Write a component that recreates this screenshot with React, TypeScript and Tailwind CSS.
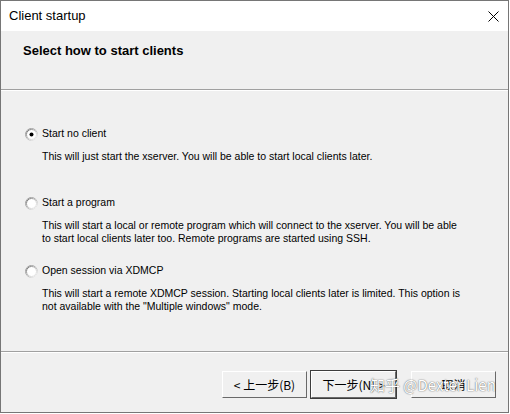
import React, { useState } from 'react';

const SANS = "font-['Liberation_Sans',Arial,sans-serif]";

const Radio: React.FC<{ checked: boolean }> = ({ checked }) => (
  <svg width="13" height="13" viewBox="0 0 13 13" className="shrink-0">
    <defs>
      <linearGradient id="rOuter" x1="0" y1="0" x2="1" y2="1">
        <stop offset="0" stopColor="#8c8c8c" />
        <stop offset="0.5" stopColor="#b4b4b4" />
        <stop offset="1" stopColor="#ffffff" />
      </linearGradient>
      <linearGradient id="rInner" x1="0" y1="0" x2="1" y2="1">
        <stop offset="0" stopColor="#5a5a5a" />
        <stop offset="0.5" stopColor="#c8c8c8" />
        <stop offset="1" stopColor="#eeeeee" />
      </linearGradient>
    </defs>
    <circle cx="6.5" cy="6.5" r="6" fill="#ffffff" stroke="url(#rOuter)" strokeWidth="1" />
    <circle cx="6.5" cy="6.5" r="5" fill="none" stroke="url(#rInner)" strokeWidth="1" />
    {checked && <circle cx="6.5" cy="6.5" r="2" fill="#000000" />}
  </svg>
);

interface Option {
  label: string;
  desc: string[];
}

const OPTIONS: Option[] = [
  {
    label: 'Start no client',
    desc: ['This will just start the xserver. You will be able to start local clients later.'],
  },
  {
    label: 'Start a program',
    desc: [
      'This will start a local or remote program which will connect to the xserver. You will be able',
      'to start local clients later too. Remote programs are started using SSH.',
    ],
  },
  {
    label: 'Open session via XDMCP',
    desc: [
      'This will start a remote XDMCP session. Starting local clients later is limited. This option is',
      'not available with the "Multiple windows" mode.',
    ],
  },
];

const Button: React.FC<{ label: string; isDefault?: boolean }> = ({ label, isDefault }) => (
  <button
    className={`w-[87px] h-[29px] bg-[#f0f0f0] text-[12px] text-black font-['Noto_Sans_CJK_SC',sans-serif] ${
      isDefault ? 'border border-[#3c3c3c]' : 'border border-transparent'
    }`}
  >
    <div className="w-full h-full border-t border-l border-white border-b border-r border-b-[#696969] border-r-[#696969] flex items-center justify-center">
      {label}
    </div>
  </button>
);

export default function App() {
  const [selected, setSelected] = useState(0);

  return (
    <div className="w-[510px] h-[414px] bg-white">
      <div className={`relative w-[509px] h-[413px] border border-[#767676] bg-[#f0f0f0] flex flex-col ${SANS}`}>
        {/* title bar */}
        <div className="h-[30px] bg-white flex items-center justify-between pl-[8px] pr-[8px]">
          <span className="text-[13px] text-black">Client startup</span>
          <svg width="11" height="11" viewBox="0 0 11 11" className="mr-[1px]">
            <path d="M0.5 0.5 L10.5 10.5 M10.5 0.5 L0.5 10.5" stroke="#000" strokeWidth="1" />
          </svg>
        </div>

        {/* header */}
        <div className="h-[58px] flex items-start pt-[10px] pl-[22px]">
          <span className="text-[13px] font-bold text-black">Select how to start clients</span>
        </div>
        <div className="h-px bg-[#a0a0a0]" />
        <div className="h-px bg-white" />

        {/* options */}
        <div className="flex-1 flex flex-col pt-[36px] pl-[24px] text-[10.5px] text-black">
          {OPTIONS.map((o, i) => (
            <div key={o.label} className={i === 0 ? 'h-[69px]' : 'h-[68px]'}>
              <div className="h-[14px] flex items-center gap-[4px] cursor-default" onClick={() => setSelected(i)}>
                <Radio checked={selected === i} />
                <span>{o.label}</span>
              </div>
              <div className="mt-[9px] pl-[17px] leading-[13px]">
                {o.desc.map((d) => (
                  <div key={d} className="whitespace-nowrap">{d}</div>
                ))}
              </div>
            </div>
          ))}
        </div>

        {/* footer */}
        <div className="h-px bg-[#a0a0a0]" />
        <div className="h-px bg-white" />
        <div className="h-[59px] flex items-start justify-end pt-[17px] pr-[11px]">
          <Button label="< 上一步(B)" />
          <div className="ml-[2px]">
            <Button label="下一步(N) >" isDefault />
          </div>
          <div className="ml-[13px]">
            <Button label="取消" />
          </div>
        </div>

        {/* watermark */}
        <div className="absolute left-[369px] top-[373px] text-[15px] text-white whitespace-nowrap font-['Noto_Sans_CJK_SC',sans-serif] [text-shadow:0_0_1px_rgba(0,0,0,0.6),0_0_2px_rgba(0,0,0,0.3)]">
          知乎 @Dexter Lien
        </div>
      </div>
    </div>
  );
}
